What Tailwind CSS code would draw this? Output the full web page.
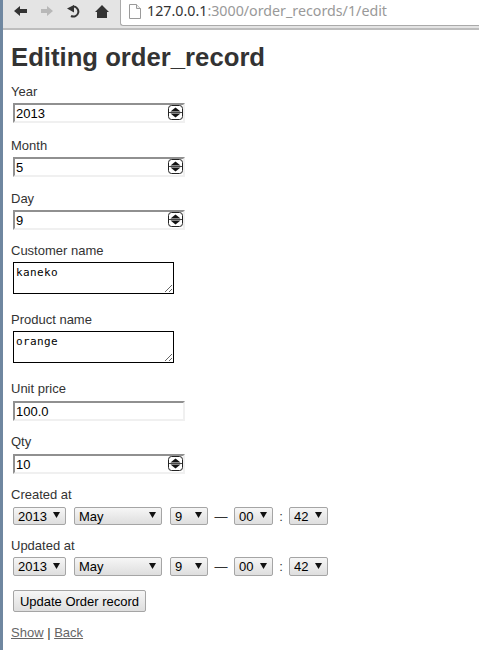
<!DOCTYPE html>
<html lang="en">
<head>
    <meta charset="UTF-8">
    <title>Editing order_record</title>
    <script src="https://cdn.jsdelivr.net/npm/@tailwindcss/browser@4"></script>
</head>
<body class="bg-white text-[#333] font-['Liberation_Sans',sans-serif] text-[13px] leading-[15px] h-[650px] overflow-hidden flex">
    <!-- window edge -->
    <div class="w-[3px] shrink-0 bg-[#6f87a0]"></div>

    <div class="flex-1 min-w-0">
        <!-- browser toolbar -->
        <div class="h-[30px] flex items-start bg-[#e4e4e4] border-b-2 border-[#bdbdbd]">
            <div class="flex items-center gap-[14px] h-[22px] w-[117px] shrink-0 pl-[11px]">
                <svg class="w-[13px] h-[10px]" viewBox="0 0 13 10"><path d="M0 5 6 0v3h7v4H6v3z" fill="#333"/></svg>
                <svg class="w-[12px] h-[10px]" viewBox="0 0 12 10"><path d="M12 5 6 0v3H0v4h6v3z" fill="#b8b8b8"/></svg>
                <svg class="w-[14px] h-[14px]" viewBox="0 0 14 14"><path d="M6 2.600A5 5 0 1 1 4 12" fill="none" stroke="#333" stroke-width="2"/><path d="M0 4.500 7 1V8.500z" fill="#333"/></svg>
                <svg class="w-[14px] h-[13px]" viewBox="0 0 14 13"><path d="M7 0 14 7h-2v6H2V7H0z" fill="#333"/></svg>
            </div>
            <div class="flex items-start h-[26px] flex-1 bg-white border-l border-b border-[#aaa] rounded-bl-[3px] pl-[8px] pt-[4px] font-['Noto_Sans',sans-serif] text-[14.25px]">
                <svg class="w-[12px] h-[15px] shrink-0 mr-[6px]" viewBox="0 0 12 15"><path d="M.5.500h7l4 4v10H.5z" fill="#fff" stroke="#9a9a9a"/><path d="M7.500.500v4h4" fill="#eee" stroke="#9a9a9a"/></svg>
                <span class="text-[#333] leading-[14px]">127.0.0.1<span class="text-[#999]">:3000/order_records/1/edit</span></span>
            </div>
        </div>

        <!-- page -->
        <div class="pl-[8px]">
            <h1 class="font-bold text-[25.7px] leading-[30px] mt-[12px] mb-[12px]">Editing order_record</h1>
            <form onsubmit="event.preventDefault();">
                <label class="block">Year</label>
                <div class="relative w-[172px] h-[20px] mt-[4px] ml-[2px] mb-[15px]">
                    <input type="text" value="2013" class="w-full h-full pl-[1px] bg-white text-black text-[13px] outline-none border-2 border-[#f0f0f0] border-t-[#909090] border-l-[#909090]">
                    <svg class="absolute right-[2px] top-[2px] w-[15px] h-[15px]" viewBox="0 0 15 15"><rect x=".5" y=".5" width="14" height="14" rx="3" fill="#fff" stroke="#222"/><path d="M2.500 6.500h10L7.500 2.500zM2.500 8.500h10L7.500 12.500z" fill="#111"/><path d="M1 7.500h13" stroke="#444"/></svg>
                </div>
                <label class="block">Month</label>
                <div class="relative w-[172px] h-[20px] mt-[4px] ml-[2px] mb-[14px]">
                    <input type="text" value="5" class="w-full h-full pl-[1px] bg-white text-black text-[13px] outline-none border-2 border-[#f0f0f0] border-t-[#909090] border-l-[#909090]">
                    <svg class="absolute right-[2px] top-[2px] w-[15px] h-[15px]" viewBox="0 0 15 15"><rect x=".5" y=".5" width="14" height="14" rx="3" fill="#fff" stroke="#222"/><path d="M2.500 6.500h10L7.500 2.500zM2.500 8.500h10L7.500 12.500z" fill="#111"/><path d="M1 7.500h13" stroke="#444"/></svg>
                </div>
                <label class="block">Day</label>
                <div class="relative w-[172px] h-[20px] mt-[4px] ml-[2px] mb-[13px]">
                    <input type="text" value="9" class="w-full h-full pl-[1px] bg-white text-black text-[13px] outline-none border-2 border-[#f0f0f0] border-t-[#909090] border-l-[#909090]">
                    <svg class="absolute right-[2px] top-[2px] w-[15px] h-[15px]" viewBox="0 0 15 15"><rect x=".5" y=".5" width="14" height="14" rx="3" fill="#fff" stroke="#222"/><path d="M2.500 6.500h10L7.500 2.500zM2.500 8.500h10L7.500 12.500z" fill="#111"/><path d="M1 7.500h13" stroke="#444"/></svg>
                </div>
                <label class="block">Customer name</label>
                <textarea class="block w-[161px] h-[32px] mt-[4px] ml-[2px] mb-[18px] px-[2px] pt-[3px] border border-black bg-white text-black outline-none font-['DejaVu_Sans_Mono',monospace] text-[11px] tracking-[0.4px] leading-[13px]">kaneko</textarea>
                <label class="block">Product name</label>
                <textarea class="block w-[161px] h-[32px] mt-[4px] ml-[2px] mb-[18px] px-[2px] pt-[3px] border border-black bg-white text-black outline-none font-['DejaVu_Sans_Mono',monospace] text-[11px] tracking-[0.4px] leading-[13px]">orange</textarea>
                <label class="block">Unit price</label>
                <input type="text" value="100.0" class="block w-[172px] h-[20px] mt-[5px] ml-[2px] mb-[13px] pl-[1px] bg-white text-black text-[13px] outline-none border-2 border-[#f0f0f0] border-t-[#909090] border-l-[#909090]">
                <label class="block">Qty</label>
                <div class="relative w-[172px] h-[20px] mt-[5px] ml-[2px] mb-[13px]">
                    <input type="text" value="10" class="w-full h-full pl-[1px] bg-white text-black text-[13px] outline-none border-2 border-[#f0f0f0] border-t-[#909090] border-l-[#909090]">
                    <svg class="absolute right-[2px] top-[2px] w-[15px] h-[15px]" viewBox="0 0 15 15"><rect x=".5" y=".5" width="14" height="14" rx="3" fill="#fff" stroke="#222"/><path d="M2.500 6.500h10L7.500 2.500zM2.500 8.500h10L7.500 12.500z" fill="#111"/><path d="M1 7.500h13" stroke="#444"/></svg>
                </div>

                <label class="block">Created at</label>
                <div class="flex items-center h-[18px] mt-[5px] ml-[2px] mb-[13px]">
                    <div class="relative w-[53px] h-full mr-[8px]"><select class="appearance-none w-full h-full pl-[4px] border border-[#a5a5a5] rounded-[2px] bg-gradient-to-b from-[#f6f6f6] to-[#dedede] text-black"><option>2013</option></select><svg class="absolute right-[6px] top-[5px] w-[7px] h-[6px]" viewBox="0 0 7 6"><path d="M0 0h7L3.500 6z" fill="#111"/></svg></div>
                    <div class="relative w-[88px] h-full mr-[8px]"><select class="appearance-none w-full h-full pl-[4px] border border-[#a5a5a5] rounded-[2px] bg-gradient-to-b from-[#f6f6f6] to-[#dedede] text-black"><option>May</option></select><svg class="absolute right-[6px] top-[5px] w-[7px] h-[6px]" viewBox="0 0 7 6"><path d="M0 0h7L3.500 6z" fill="#111"/></svg></div>
                    <div class="relative w-[38px] h-full"><select class="appearance-none w-full h-full pl-[4px] border border-[#a5a5a5] rounded-[2px] bg-gradient-to-b from-[#f6f6f6] to-[#dedede] text-black"><option>9</option></select><svg class="absolute right-[6px] top-[5px] w-[7px] h-[6px]" viewBox="0 0 7 6"><path d="M0 0h7L3.500 6z" fill="#111"/></svg></div>
                    <span class="w-[26px] text-center">—</span>
                    <div class="relative w-[39px] h-full"><select class="appearance-none w-full h-full pl-[4px] border border-[#a5a5a5] rounded-[2px] bg-gradient-to-b from-[#f6f6f6] to-[#dedede] text-black"><option>00</option></select><svg class="absolute right-[6px] top-[5px] w-[7px] h-[6px]" viewBox="0 0 7 6"><path d="M0 0h7L3.500 6z" fill="#111"/></svg></div>
                    <span class="w-[16px] text-center">:</span>
                    <div class="relative w-[39px] h-full"><select class="appearance-none w-full h-full pl-[4px] border border-[#a5a5a5] rounded-[2px] bg-gradient-to-b from-[#f6f6f6] to-[#dedede] text-black"><option>42</option></select><svg class="absolute right-[6px] top-[5px] w-[7px] h-[6px]" viewBox="0 0 7 6"><path d="M0 0h7L3.500 6z" fill="#111"/></svg></div>
                </div>

                <label class="block">Updated at</label>
                <div class="flex items-center h-[19px] mt-[4px] ml-[2px] mb-[14px]">
                    <div class="relative w-[53px] h-full mr-[8px]"><select class="appearance-none w-full h-full pl-[4px] border border-[#a5a5a5] rounded-[2px] bg-gradient-to-b from-[#f6f6f6] to-[#dedede] text-black"><option>2013</option></select><svg class="absolute right-[6px] top-[6px] w-[7px] h-[6px]" viewBox="0 0 7 6"><path d="M0 0h7L3.500 6z" fill="#111"/></svg></div>
                    <div class="relative w-[88px] h-full mr-[8px]"><select class="appearance-none w-full h-full pl-[4px] border border-[#a5a5a5] rounded-[2px] bg-gradient-to-b from-[#f6f6f6] to-[#dedede] text-black"><option>May</option></select><svg class="absolute right-[6px] top-[6px] w-[7px] h-[6px]" viewBox="0 0 7 6"><path d="M0 0h7L3.500 6z" fill="#111"/></svg></div>
                    <div class="relative w-[38px] h-full"><select class="appearance-none w-full h-full pl-[4px] border border-[#a5a5a5] rounded-[2px] bg-gradient-to-b from-[#f6f6f6] to-[#dedede] text-black"><option>9</option></select><svg class="absolute right-[6px] top-[6px] w-[7px] h-[6px]" viewBox="0 0 7 6"><path d="M0 0h7L3.500 6z" fill="#111"/></svg></div>
                    <span class="w-[26px] text-center">—</span>
                    <div class="relative w-[39px] h-full"><select class="appearance-none w-full h-full pl-[4px] border border-[#a5a5a5] rounded-[2px] bg-gradient-to-b from-[#f6f6f6] to-[#dedede] text-black"><option>00</option></select><svg class="absolute right-[6px] top-[6px] w-[7px] h-[6px]" viewBox="0 0 7 6"><path d="M0 0h7L3.500 6z" fill="#111"/></svg></div>
                    <span class="w-[16px] text-center">:</span>
                    <div class="relative w-[39px] h-full"><select class="appearance-none w-full h-full pl-[4px] border border-[#a5a5a5] rounded-[2px] bg-gradient-to-b from-[#f6f6f6] to-[#dedede] text-black"><option>42</option></select><svg class="absolute right-[6px] top-[6px] w-[7px] h-[6px]" viewBox="0 0 7 6"><path d="M0 0h7L3.500 6z" fill="#111"/></svg></div>
                </div>

                <button type="submit" class="block w-[133px] h-[22px] ml-[2px] border border-[#a5a5a5] rounded-[2px] bg-gradient-to-b from-[#f6f6f6] to-[#dedede] text-black text-[13px]">Update Order record</button>
            </form>
            <p class="mt-[13px]"><a href="#" class="text-[#666] underline">Show</a> | <a href="#" class="text-[#666] underline">Back</a></p>
        </div>
    </div>
</body>
</html>
